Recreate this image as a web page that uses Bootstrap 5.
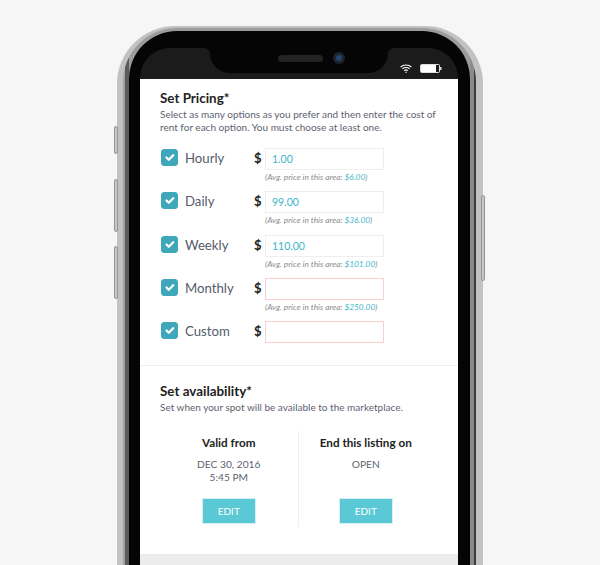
<!DOCTYPE html>
<html lang="en">
<head>
<meta charset="utf-8">
<title>Set Pricing</title>
<link href="https://cdn.jsdelivr.net/npm/bootstrap@5.3.0/dist/css/bootstrap.min.css" rel="stylesheet">
<style>
html,body{height:565px;overflow:hidden}
body{background:#f6f6f6;font-family:"Lato","Liberation Sans",sans-serif;color:#555b6b;padding-top:26px}
.phone-shell{position:relative;width:366px;height:539px;margin:0 0 0 117px;border-radius:58px 58px 0 0;padding:2px 7px 0 6px;background:#c2c2c2}
.phone-ring{height:100%;border-radius:54px 54px 0 0;padding:3px 6px 0 6px;background:linear-gradient(90deg,#a2a2a2 0 2px,#5c5c5c 2px 6px,#9c9c9c 6px calc(100% - 6px),#8a8a8a calc(100% - 6px) calc(100% - 2px),#3c3c3c calc(100% - 2px))}
.phone-black{background:#050505;border-radius:48px 48px 0 0;padding:17px 12px 0 11px;height:100%}
.status-strip{height:31px;background:#1b1b1b;border-radius:30px 30px 0 0;position:relative}
.notch-cut{position:absolute;left:70px;top:0;width:178px;height:25px;background:#050505;border-radius:0 0 20px 20px}
.notch-cut::before,.notch-cut::after{content:"";position:absolute;top:0;width:6px;height:6px}
.notch-cut::before{left:-6px;background:radial-gradient(circle at 0 100%,transparent 5.5px,#050505 6.5px)}
.notch-cut::after{right:-6px;background:radial-gradient(circle at 100% 100%,transparent 5.5px,#050505 6.5px)}
.speaker-slot{position:absolute;left:68px;top:7px;width:45px;height:7px;border-radius:4px;background:#232323}
.camera-dot{position:absolute;left:123px;top:4px;width:12px;height:12px;border-radius:50%;background:#1c2430}
.camera-dot::after{content:"";position:absolute;left:3px;top:3px;width:6px;height:6px;border-radius:50%;background:#24476e}
.status-icons{position:absolute;right:16px;top:16px}
.screen-white{background:#fff;height:486px;overflow:hidden}
.side-key{position:absolute;width:4px;background:#c8c8c8;border:1px solid #949494;border-radius:2px}
.key-a{left:-3px;top:100px;height:28px}
.key-b{left:-3px;top:153px;height:53px}
.key-c{left:-3px;top:220px;height:53px}
.key-d{right:-2px;top:169px;height:86px}
.pricing-part{padding:10px 20px 0 20px;height:287px;border-bottom:1px solid #f0f0f0}
.part-title{font-size:13.4px;font-weight:700;color:#222;line-height:18px;margin:0}
.part-text{font-size:10px;line-height:12.5px;margin:1px 0 0;color:#5d6270;white-space:nowrap}
.price-list{margin-top:15px}
.price-row{height:43.3px}
.tick-box.form-check-input{width:17px;height:17px;margin:1px 0 0 1px;border-radius:3px;background-color:#3ea7b9;border-color:#3ea7b9;flex:none}
.price-name{width:69px;margin-left:7px;font-size:13.2px;line-height:20px;color:#555b6b}
.price-cur{width:11px;font-size:13px;font-weight:700;color:#222;line-height:20px}
.price-box{width:119px}
.price-box .form-control{height:22px;border-radius:0;border:1px solid #eee;padding:0 6px;font-size:10.5px;color:#3db3c9;font-family:inherit;box-shadow:none}
.price-box .form-control.needs-fill{border-color:#fbcfcf}
.price-hint{font-size:8.3px;font-style:italic;color:#8b8b8b;line-height:10px;margin-top:2px;white-space:nowrap}
.price-hint b{font-weight:400;color:#4ab8cb}
.avail-part{padding:16px 20px 0 20px;height:188px}
.avail-cols{margin:17px 3px 0 0;height:96px}
.avail-col{padding:0;text-align:center;height:96px}
.avail-col+.avail-col{border-left:1px solid #eee;padding-right:2px}
.avail-head{font-size:11.7px;font-weight:700;color:#222;line-height:15px;margin:4px 0 0}
.avail-val{font-size:10.2px;line-height:13px;height:26px;margin:8px 0 14px;color:#5d6270}
.edit-btn.btn{width:54px;height:26px;padding:0;border-radius:0;background:#5bc8d6;border:1px solid #d5f1f5;color:#fff;font-size:10px;line-height:24px}
.grey-foot{background:#ececec;height:11px;margin:0}
</style>
</head>
<body>
<div class="phone-shell">
  <span class="side-key key-a"></span><span class="side-key key-b"></span><span class="side-key key-c"></span><span class="side-key key-d"></span>
  <div class="phone-ring">
  <div class="phone-black">
    <div class="status-strip">
      <div class="notch-cut"><span class="speaker-slot"></span><span class="camera-dot"></span></div>
      <div class="status-icons d-flex align-items-center gap-2">
        <svg width="12" height="9" viewBox="0 0 12 9" fill="none" stroke="#fff" stroke-width="1.1"><path d="M.6 3C3.6.4 8.4.4 11.4 3"/><path d="M2.4 4.9C4.4 3.2 7.6 3.2 9.6 4.9"/><path d="M4.2 6.6C5.2 5.8 6.8 5.8 7.8 6.6"/><circle cx="6" cy="8.2" r=".7" fill="#fff" stroke="none"/></svg>
        <svg width="22" height="9" viewBox="0 0 22 9"><rect x=".5" y=".5" width="19" height="8" rx="1" fill="none" stroke="#ddd"/><rect x="1" y="1" width="15" height="7" fill="#fff"/><rect x="20" y="3" width="1.5" height="3" fill="#ddd"/></svg>
      </div>
    </div>
    <div class="screen-white">
      <section class="pricing-part">
        <h2 class="part-title">Set Pricing*</h2>
        <p class="part-text">Select as many options as you prefer and then enter the cost of<br>rent for each option. You must choose at least one.</p>
        <div class="price-list">
          <div class="price-row d-flex align-items-start">
            <input class="form-check-input tick-box" type="checkbox" checked aria-label="Hourly">
            <span class="price-name">Hourly</span><span class="price-cur">$</span>
            <div class="price-box"><input class="form-control" value="1.00" aria-label="Hourly price"><div class="price-hint">(Avg. price in this area: <b>$6.00</b>)</div></div>
          </div>
          <div class="price-row d-flex align-items-start">
            <input class="form-check-input tick-box" type="checkbox" checked aria-label="Daily">
            <span class="price-name">Daily</span><span class="price-cur">$</span>
            <div class="price-box"><input class="form-control" value="99.00" aria-label="Daily price"><div class="price-hint">(Avg. price in this area: <b>$36.00</b>)</div></div>
          </div>
          <div class="price-row d-flex align-items-start">
            <input class="form-check-input tick-box" type="checkbox" checked aria-label="Weekly">
            <span class="price-name">Weekly</span><span class="price-cur">$</span>
            <div class="price-box"><input class="form-control" value="110.00" aria-label="Weekly price"><div class="price-hint">(Avg. price in this area: <b>$101.00</b>)</div></div>
          </div>
          <div class="price-row d-flex align-items-start">
            <input class="form-check-input tick-box" type="checkbox" checked aria-label="Monthly">
            <span class="price-name">Monthly</span><span class="price-cur">$</span>
            <div class="price-box"><input class="form-control needs-fill" aria-label="Monthly price"><div class="price-hint">(Avg. price in this area: <b>$250.00</b>)</div></div>
          </div>
          <div class="price-row d-flex align-items-start">
            <input class="form-check-input tick-box" type="checkbox" checked aria-label="Custom">
            <span class="price-name">Custom</span><span class="price-cur">$</span>
            <div class="price-box"><input class="form-control needs-fill" aria-label="Custom price"></div>
          </div>
        </div>
      </section>
      <section class="avail-part">
        <h2 class="part-title">Set availability*</h2>
        <p class="part-text">Set when your spot will be available to the marketplace.</p>
        <div class="row g-0 avail-cols">
          <div class="col-6 avail-col">
            <h3 class="avail-head">Valid from</h3>
            <div class="avail-val">DEC 30, 2016<br>5:45 PM</div>
            <button class="btn edit-btn" type="button">EDIT</button>
          </div>
          <div class="col-6 avail-col">
            <h3 class="avail-head">End this listing on</h3>
            <div class="avail-val">OPEN</div>
            <button class="btn edit-btn" type="button">EDIT</button>
          </div>
        </div>
      </section>
      <div class="grey-foot"></div>
    </div>
  </div>
  </div>
</div>
<script src="https://cdn.jsdelivr.net/npm/bootstrap@5.3.0/dist/js/bootstrap.bundle.min.js"></script>
</body>
</html>
